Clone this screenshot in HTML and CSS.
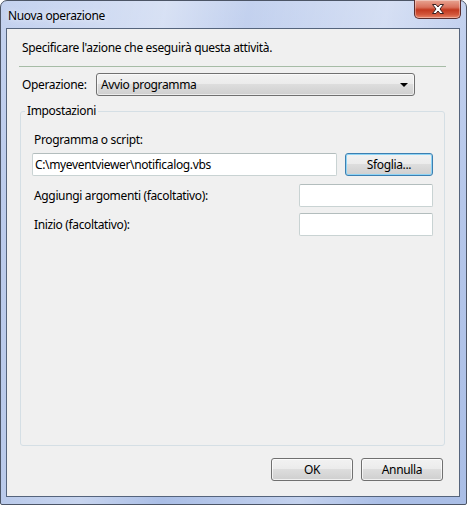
FILE: index.html
```html
<!DOCTYPE html>
<html lang="it">
<head>
<meta charset="utf-8">
<title>Nuova operazione</title>
<link rel="stylesheet" href="styles.css">
</head>
<body>
<div class="window">
  <div class="titlebar">
    <span class="title">Nuova operazione</span>
    <div class="close">
      <svg width="16" height="12" viewBox="0 0 16 12">
        <path d="M2.5 1.5 L6 1.5 L8 4 L10 1.5 L13.5 1.5 L10 6 L13.5 10.5 L10 10.5 L8 8 L6 10.5 L2.5 10.5 L6 6 Z" fill="#fff" stroke="#3b2020" stroke-width="1" stroke-linejoin="round"/>
      </svg>
    </div>
  </div>
  <div class="client">
    <p class="intro">Specificare l'azione che eseguirà questa attività.</p>
    <div class="separator"></div>
    <div class="op-row">
      <span class="op-label">Operazione:</span>
      <div class="combo">
        <span>Avvio programma</span>
        <span class="arrow"></span>
      </div>
    </div>
    <fieldset class="group">
      <legend>Impostazioni</legend>
      <div class="field-label">Programma o script:</div>
      <div class="prog-row">
        <div class="input wide">C:\myeventviewer\notificalog.vbs</div>
        <div class="btn focused">Sfoglia...</div>
      </div>
      <div class="opt-row first">
        <span>Aggiungi argomenti (facoltativo):</span>
        <div class="input small"></div>
      </div>
      <div class="opt-row">
        <span>Inizio (facoltativo):</span>
        <div class="input small"></div>
      </div>
    </fieldset>
    <div class="buttons">
      <div class="btn">OK</div>
      <div class="btn">Annulla</div>
    </div>
  </div>
</div>
</body>
</html>
```

FILE: styles.css
```css
* { box-sizing: border-box; }
html, body { margin: 0; padding: 0; }
body {
  width: 467px;
  height: 505px;
  background: #ffffff;
  font-family: "Noto Sans", "Open Sans", sans-serif;
  font-size: 12px;
  letter-spacing: -0.35px;
  color: #000;
}
.window {
  width: 467px;
  height: 505px;
  border: 1px solid #4c5566;
  border-radius: 7px 7px 2px 2px;
  background:
    linear-gradient(100deg, rgba(255,255,255,0) 0%, rgba(255,255,255,0.35) 30%, rgba(255,255,255,0) 45%, rgba(255,255,255,0.3) 70%, rgba(255,255,255,0) 85%),
    linear-gradient(180deg, #c4d2ef 0%, #b6c7ea 40%, #aabee6 100%);
  display: flex;
  flex-direction: column;
  padding: 0 6px 7px 5px;
}
.titlebar {
  height: 27px;
  position: relative;
  display: flex;
  align-items: center;
  padding-left: 2px;
}
.title {
  font-size: 12px;
  margin-top: 2px;
  text-shadow: 0 0 6px rgba(255,255,255,0.9);
}
.close {
  position: absolute;
  right: -1px;
  top: -1px;
  width: 47px;
  height: 19px;
  border: 1px solid #5a2d2d;
  border-top: none;
  border-radius: 0 0 5px 5px;
  background: linear-gradient(180deg, #e8a593 0%, #d9715c 40%, #c2391f 55%, #d2563a 80%, #e9866a 100%);
  display: flex;
  align-items: center;
  justify-content: center;
  box-shadow: inset 0 0 0 1px rgba(255,255,255,0.35);
}
.client {
  flex: 1;
  border: 1px solid #55647c;
  background: #f0f0f0;
  display: flex;
  flex-direction: column;
}
.intro {
  margin: 11px 0 0 15px;
  line-height: 16px;
  height: 16px;
}
.separator {
  height: 1px;
  background: #a6bca6;
  margin: 10px 13px 0 12px;
}
.op-row {
  display: flex;
  align-items: center;
  margin-top: 6px;
  padding-left: 15px;
  height: 23px;
}
.op-label { width: 74px; }
.combo {
  width: 319px;
  height: 23px;
  border: 1px solid #707070;
  border-radius: 3px;
  background: linear-gradient(180deg, #f2f2f2 0%, #ebebeb 49%, #dddddd 50%, #cfcfcf 100%);
  display: flex;
  align-items: center;
  justify-content: space-between;
  padding: 0 6px 0 4px;
  box-shadow: inset 0 0 0 1px rgba(255,255,255,0.6);
}
.arrow {
  width: 0;
  height: 0;
  border-left: 4px solid transparent;
  border-right: 4px solid transparent;
  border-top: 4px solid #000;
}
.group {
  margin: 7px 14px 0 13px;
  padding: 0 11px 0 13px;
  border: 1px solid #d5dfe5;
  border-radius: 3px;
  min-inline-size: 0;
  height: 343px;
}
.group legend {
  padding: 0 2px;
  margin-left: -9px;
  line-height: 16px;
}
.field-label {
  margin-top: 13px;
  line-height: 16px;
}
.prog-row {
  display: flex;
  align-items: center;
  margin-top: 5px;
  gap: 8px;
  margin-left: -2px;
}
.input {
  height: 23px;
  background: #fff;
  border: 1px solid #c9d3d3;
  border-top-color: #b3bdbd;
  border-radius: 2px;
  display: flex;
  align-items: center;
  padding-left: 2px;
}
.input.wide { width: 305px; }
.input.small { width: 134px; }
.btn {
  height: 23px;
  width: 82px;
  border: 1px solid #707070;
  border-radius: 3px;
  background: linear-gradient(180deg, #f2f2f2 0%, #ebebeb 49%, #dddddd 50%, #cfcfcf 100%);
  display: flex;
  align-items: center;
  justify-content: center;
  box-shadow: inset 0 0 0 1px rgba(255,255,255,0.7);
}
.btn.focused {
  width: 88px;
  border-color: #3c7fb1;
  box-shadow: inset 0 0 0 1px #8fd4f5;
}
.opt-row {
  display: flex;
  align-items: center;
  justify-content: space-between;
  margin-top: 6px;
}
.opt-row.first { margin-top: 8px; }
.buttons {
  display: flex;
  justify-content: flex-end;
  gap: 8px;
  margin: 12px 16px 0 0;
}
```
